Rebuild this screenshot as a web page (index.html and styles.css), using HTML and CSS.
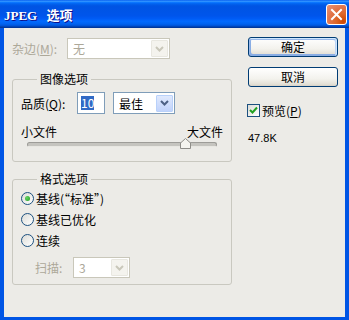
FILE: index.html
```html
<!DOCTYPE html>
<html lang="zh-CN">
<head>
  <meta charset="UTF-8" />
  <title>JPEG 选项</title>
  <link rel="stylesheet" href="styles.css">
</head>
<body>

  <div class="window">

    <!-- title bar -->
    <div class="titlebar">
      <span class="title">JPEG 选项</span>
      <button class="close-btn" title="关闭">
        <svg width="13" height="13" viewBox="0 0 13 13">
          <path d="M2 2 L11 11 M11 2 L2 11" stroke="#fff" stroke-width="2" stroke-linecap="square"/>
        </svg>
      </button>
    </div>

    <div class="frame">
      <div class="main">

        <!-- left column -->
        <div class="left-col">
          <div class="matte-row">
            <span class="matte-label disabled">杂边(<u>M</u>):</span>
            <div class="select select-off matte-select">
              <span class="select-value">无</span>
              <span class="arrow">
                <svg width="9" height="6" viewBox="0 0 9 6"><path d="M1 1 L4.5 4.5 L8 1" stroke="#c9c7ba" stroke-width="2" fill="none"/></svg>
              </span>
            </div>
          </div>

          <fieldset class="group image-group">
            <legend>图像选项</legend>
            <div class="quality-row">
              <span class="quality-label">品质(<u>Q</u>):</span>
              <div class="text-input"><span class="sel-text">10</span></div>
              <div class="select quality-select">
                <span class="select-value">最佳</span>
                <span class="arrow">
                  <svg width="9" height="6" viewBox="0 0 9 6"><path d="M1 1 L4.5 4.5 L8 1" stroke="#4d6185" stroke-width="2" fill="none"/></svg>
                </span>
              </div>
            </div>
            <div class="size-labels">
              <span>小文件</span>
              <span>大文件</span>
            </div>
            <div class="slider">
              <div class="track"></div>
              <svg class="thumb" width="11" height="11" viewBox="0 0 11 11">
                <path d="M0.5 10.5 V5 L5.5 0.5 L10.5 5 V10.5 Z" fill="#f5f4ef" stroke="#8e8d88"/>
              </svg>
            </div>
          </fieldset>

          <fieldset class="group format-group">
            <legend>格式选项</legend>
            <div class="radio-row">
              <span class="radio checked"></span>
              <span>基线(“标准”)</span>
            </div>
            <div class="radio-row">
              <span class="radio"></span>
              <span>基线已优化</span>
            </div>
            <div class="radio-row">
              <span class="radio"></span>
              <span>连续</span>
            </div>
            <div class="scan-row">
              <span class="scan-label disabled">扫描:</span>
              <div class="select select-off scan-select">
                <span class="select-value">3</span>
                <span class="arrow">
                  <svg width="9" height="6" viewBox="0 0 9 6"><path d="M1 1 L4.5 4.5 L8 1" stroke="#c9c7ba" stroke-width="2" fill="none"/></svg>
                </span>
              </div>
            </div>
          </fieldset>
        </div>

        <!-- right column -->
        <div class="right-col">
          <button class="btn btn-default">确定</button>
          <button class="btn">取消</button>
          <div class="check-row">
            <span class="checkbox">
              <svg width="9" height="9" viewBox="0 0 9 9"><path d="M1 4 L3.5 6.5 L8 1.5" stroke="#21a121" stroke-width="2" fill="none"/></svg>
            </span>
            <span>预览(<u>P</u>)</span>
          </div>
          <div class="file-size">47.8K</div>
        </div>

      </div>
    </div>
  </div>

</body>
</html>
```

FILE: styles.css
```css
* {
  box-sizing: border-box;
  margin: 0;
  padding: 0;
}

body {
  font-family: "Noto Sans CJK SC", "Liberation Sans", sans-serif;
  font-size: 12px;
  color: #000;
  width: 349px;
  height: 320px;
  overflow: hidden;
}

/* ===== WINDOW ===== */
.window {
  width: 349px;
  height: 320px;
  display: flex;
  flex-direction: column;
}

.titlebar {
  height: 28px;
  flex-shrink: 0;
  display: flex;
  align-items: center;
  justify-content: space-between;
  padding: 0 2px 0 4px;
  background: linear-gradient(to bottom, #0058ee 0%, #3593ff 4%, #288eff 6%, #127dff 8%, #036ffc 10%, #0262ee 14%, #0057e5 20%, #0054e3 24%, #0055eb 56%, #005bf5 66%, #026afe 76%, #0062ef 86%, #0052d6 92%, #0040ab 96%, #003092 100%);
}

.title {
  color: white;
  font-family: "Liberation Serif", "Noto Sans CJK SC", serif;
  font-weight: bold;
  font-size: 13px;
  word-spacing: 6px;
  text-shadow: 1px 1px #0f1089;
}

.close-btn {
  width: 21px;
  height: 21px;
  border: 1px solid #fff;
  border-radius: 3px;
  background: radial-gradient(circle at 85% 85%, #cc4600 0%, #dc6527 30%, #e1744a 60%, #e9957a 100%);
  display: flex;
  align-items: center;
  justify-content: center;
}

.frame {
  flex: 1;
  background: #0055e5;
  padding: 0 4px 3px 4px;
  display: flex;
}

.main {
  flex: 1;
  background: #ecebe7;
  display: flex;
  padding-left: 8px;
}

.disabled {
  color: #aca899;
}

/* ===== LEFT COLUMN ===== */
.left-col {
  width: 220px;
  display: flex;
  flex-direction: column;
}

.matte-row {
  display: flex;
  align-items: center;
  margin-top: 10px;
}

.matte-label {
  width: 55px;
}

.select {
  display: flex;
  align-items: center;
  justify-content: space-between;
  height: 21px;
  border: 1px solid #7f9db9;
  background: white;
  padding: 1px;
}

.select-value {
  padding-left: 4px;
}

.select .arrow {
  width: 17px;
  height: 17px;
  display: flex;
  align-items: center;
  justify-content: center;
  border: 1px solid #b9d1fa;
  border-radius: 1px;
  background: linear-gradient(#e0e9fd, #c1d3fb);
}

.select-off {
  border-color: #c9c7ba;
  color: #aca899;
}

.select-off .arrow {
  border-color: #e8e7e0;
  background: #f4f3ee;
}

.matte-select {
  width: 103px;
}

.group {
  border: 1px solid #c9c8c0;
  border-radius: 3px;
  min-inline-size: 0;
}

.group legend {
  margin-left: 16px;
  padding: 0 3px;
  line-height: 14px;
}

.image-group {
  margin-top: 13px;
  padding: 6px 8px 14px 8px;
}

.quality-row {
  display: flex;
  align-items: center;
}

.quality-label {
  width: 56px;
}

.text-input {
  width: 28px;
  height: 22px;
  border: 1px solid #7f9db9;
  background: white;
  display: flex;
  align-items: center;
  padding-left: 3px;
}

.sel-text {
  background: #316ac5;
  color: white;
  line-height: 14px;
}

.quality-select {
  width: 62px;
  height: 22px;
  margin-left: 8px;
}

.size-labels {
  display: flex;
  justify-content: space-between;
  margin-top: 11px;
  line-height: 14px;
}

.slider {
  position: relative;
  margin: 3px 0 0 6px;
  width: 190px;
  height: 5px;
}

.track {
  height: 5px;
  border-radius: 3px;
  background: #c5c4bf;
  border: 1px solid #9d9c98;
  border-bottom-color: #e8e7e2;
}

.thumb {
  position: absolute;
  left: 153px;
  top: -4px;
}

.format-group {
  margin-top: 10px;
  padding: 2px 8px 6px 8px;
}

.radio-row {
  display: flex;
  align-items: center;
  height: 21px;
  gap: 2px;
}

.radio {
  width: 13px;
  height: 13px;
  border-radius: 50%;
  border: 1px solid #1c5180;
  background: linear-gradient(135deg, #dcdcd7, #fff);
  display: flex;
  align-items: center;
  justify-content: center;
}

.radio.checked::after {
  content: "";
  width: 5px;
  height: 5px;
  border-radius: 50%;
  background: radial-gradient(circle at 35% 35%, #64d164, #21a121);
}

.scan-row {
  display: flex;
  align-items: center;
  margin-top: 6px;
  padding-left: 14px;
}

.scan-label {
  width: 38px;
}

.scan-select {
  width: 57px;
}

/* ===== RIGHT COLUMN ===== */
.right-col {
  margin-left: 16px;
  display: flex;
  flex-direction: column;
  align-items: flex-start;
}

.btn {
  width: 90px;
  height: 20px;
  border: 1px solid #003c74;
  border-radius: 3px;
  background: linear-gradient(#fff, #f3f2ed 60%, #e3e0d6 90%, #d6d0c5);
  font-family: "Noto Sans CJK SC", sans-serif;
  font-size: 12px;
  color: #000;
  line-height: 16px;
}

.btn-default {
  margin-top: 9px;
  box-shadow: inset -1px 1px #cee7ff, inset 1px 2px #98b8ea, inset -2px 2px #bcd4f6, inset 1px -1px #89ade4, inset 2px -2px #89ade4;
}

.btn + .btn {
  margin-top: 10px;
}

.check-row {
  display: flex;
  align-items: center;
  gap: 2px;
  margin-top: 15px;
  margin-left: -1px;
}

.checkbox {
  width: 13px;
  height: 13px;
  border: 1px solid #1c5180;
  background: linear-gradient(135deg, #dcdcd7, #fff);
  display: flex;
  align-items: center;
  justify-content: center;
}

.file-size {
  margin-top: 13px;
  font-family: "Liberation Sans", sans-serif;
  font-size: 11px;
}
```
